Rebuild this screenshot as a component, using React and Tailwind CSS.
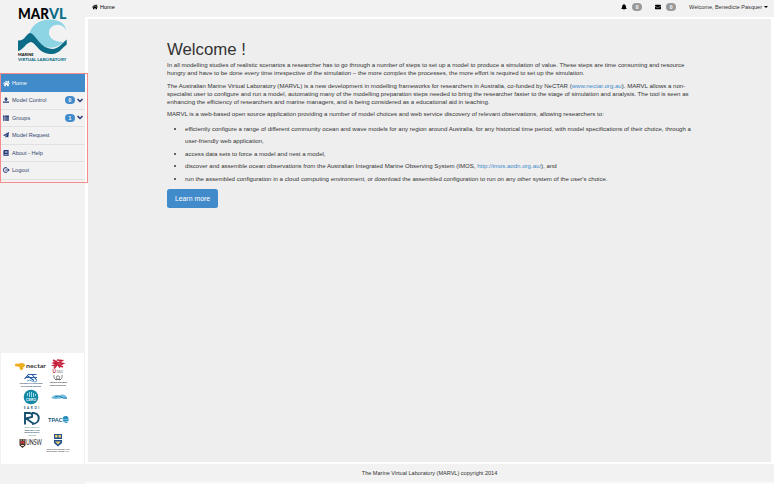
import { FaHome, FaBell, FaEnvelope, FaThList, FaBook } from "react-icons/fa";

const MENU = [
  { label: "Model Control", icon: <svg viewBox="0 0 12 12" className="size-[6px]" fill="currentColor"><path d="M6 0 10 5H7.500V8h-3V5H2zM0 9h12v2.500H0z" /></svg>, badge: "0" },
  { label: "Groups", icon: <FaThList size={6} />, badge: "1" },
  { label: "Model Request", icon: <svg viewBox="0 0 12 12" className="size-[6px]" fill="currentColor"><path d="M12 0 10.500 11 7 9.500 5 12V8.500L10 3 3.500 8 0 6.500z" /></svg> },
  { label: "About - Help", icon: <FaBook size={6} /> },
  { label: "Logout", icon: <svg viewBox="0 0 14 12" className="h-[6px] w-[7px]" fill="none" stroke="currentColor" strokeWidth="2"><path d="M8 1.500H4Q1 1.500 1 6t3 4.500h4M5 6h7M9 3l3.500 3L9 9" /></svg> },
];

function MarvlLogo() {
  return (
    <svg viewBox="0 0 51 56" className="ml-[17px] mt-[7px] h-[56px] w-[51px] overflow-visible" fontFamily="Lato, sans-serif">
      <text x="1" y="11.700" fontSize="14.200" fontWeight="900" textLength="31" lengthAdjust="spacingAndGlyphs" fill="#050505">MAR</text>
      <text x="32" y="11.700" fontSize="14.200" fontWeight="900" textLength="17.500" lengthAdjust="spacingAndGlyphs" fill="#0e6d86">VL</text>
      <path d="M12 29C13 19 22 12.500 33 12.500 42 12.500 48.500 17 49 23 46 17 38 16 33.500 21 29 28 35 35 46 35 43 39 36 42 29 40 21 37 20 29 12 29Z" fill="#8dd4e5" />
      <path d="M1 33.500C8 34 9 27 13 26 19 27 23 42 36 42 42 41.500 45 36 49.700 32.500V37.500C46 40 42 47 35 47 21 47 20 36 13.500 35 8 37 6 43 1 44Z" fill="#0e6d86" />
      <text x="1" y="49.200" fontSize="4.300" fontWeight="900" textLength="15.500" lengthAdjust="spacingAndGlyphs" fill="#111">MARINE</text>
      <text x="1" y="54" fontSize="4.500" fontWeight="900" textLength="48.500" lengthAdjust="spacingAndGlyphs" fill="#0e6d86">VIRTUAL LABORATORY</text>
    </svg>
  );
}

function Partners() {
  return (
    <svg viewBox="0 0 83 111" className="block h-[111px] w-[83px]" fontFamily="Lato, sans-serif">
      <g fill="#edae20">
        <ellipse cx="16" cy="12" rx="2.200" ry="1.600" />
        <path d="M17 11c3-2 7-1 7 1s-3 4-6 3l1-1c-2 0-3-1-2-3Z" />
        <circle cx="20.500" cy="15.500" r="1.600" />
      </g>
      <text x="25" y="15.300" fontSize="6" fontWeight="700" textLength="20" lengthAdjust="spacingAndGlyphs" fill="#333">nectar</text>
      <g fill="none" stroke="#c6203c" strokeWidth="1.600">
        <path d="M52 7l3 1.500-2.500 1.500 4 1-4 1.500 3 1M56 7l5 .5-3 2 4 1-4 2 4 1.500M55 8l4 6.500M56 12l-3 3.500" />
      </g>
      <text x="51.500" y="19.800" fontSize="4.600" fontWeight="700" fill="#c6203c">U</text>
      <text x="55" y="19.800" fontSize="4.600" textLength="7" lengthAdjust="spacingAndGlyphs" fill="#777">TAS</text>
      <g fill="none" stroke="#285fa8">
        <path d="M23.500 26l4-4.500h8M26 22.500l7 5M31 21.500l5 6M24 24.500h12" strokeWidth="1.100" />
        <path d="M26 28q3-2 5 0t5 0" stroke="#65a8d5" />
      </g>
      <text x="18.500" y="31" fontSize="2.500" fontWeight="900" textLength="23" lengthAdjust="spacingAndGlyphs" fill="#182f50">AUSTRALIAN INSTITUTE</text>
      <text x="20" y="33.700" fontSize="2.400" fontWeight="900" textLength="20" lengthAdjust="spacingAndGlyphs" fill="#182f50">OF MARINE SCIENCE</text>
      <g stroke="#666" fill="none" strokeWidth=".8">
        <circle cx="57" cy="24.500" r="1.700" />
        <path d="M53 22q-1 4 3 5M61 22q1 4-3 5M54 26.500h6" />
      </g>
      <text x="48.500" y="30" fontSize="2.300" fontWeight="700" textLength="17.500" lengthAdjust="spacingAndGlyphs" fill="#222">Australian Government</text>
      <text x="49" y="33.300" fontSize="2.300" fontWeight="700" textLength="16" lengthAdjust="spacingAndGlyphs" fill="#222">Bureau of Meteorology</text>
      <circle cx="30" cy="44" r="7.300" fill="#1488a5" />
      <path d="M26.500 43v-3m2 4v-5m2 5v-5m2 5v-4m2 3v-2" stroke="#9adce6" />
      <text x="25" y="48" fontSize="3.300" fontWeight="700" textLength="10" lengthAdjust="spacingAndGlyphs" fill="#fff">CSIRO</text>
      <path d="M50 45q4-5 8-2c4-3 7-1 8 2v1c-5-3-8 2-16-1Z" fill="#72bfdf" />
      <path d="M54 44q4-2 6 0t6 1" stroke="#287caa" fill="none" />
      <text x="22.800" y="56" fontSize="3.200" fontWeight="700" textLength="15.500" fill="#275777">SARDI</text>
      <path d="M24 71.500V60h4q4 0 3 4l-6 1.500 8 5.500M31 60c9-1 9 11 0 11" fill="none" stroke="#174f70" strokeWidth="1.900" />
      <g fill="#174766" fontSize="2.400" fontWeight="900">
        <text x="23.500" y="75.200" textLength="15" lengthAdjust="spacingAndGlyphs" fill="#55a08f">SOUTH AUSTRALIAN</text>
        <text x="23.500" y="77.800" textLength="15" lengthAdjust="spacingAndGlyphs">RESEARCH AND</text>
        <text x="23.500" y="80.300" textLength="15" lengthAdjust="spacingAndGlyphs">DEVELOPMENT</text>
        <text x="27" y="82.800" textLength="8" lengthAdjust="spacingAndGlyphs" fill="#55a08f">INSTITUTE</text>
      </g>
      <text x="47" y="69.300" fontSize="6.300" fontWeight="700" textLength="14.500" lengthAdjust="spacingAndGlyphs" fill="#155879">TPAC</text>
      <path d="M66.500 63.500C60 61 60 71 67 70l-2-1.800h2.500v-3Z" fill="#258dbc" />
      <path d="M62 66.500h5M63 68.500h4" stroke="#bfe1f0" strokeWidth=".5" />
      <path d="M18.500 86h6v6.500l-3 2.500-3-2.500Z" fill="#453b36" />
      <path d="M19.500 88.500h4v2h-4z" fill="#d83b35" />
      <path d="M19.500 87h1.500m1 0h1.500M20 92.500h3" stroke="#ead6b1" />
      <text x="25" y="91.500" fontSize="7" textLength="16" lengthAdjust="spacingAndGlyphs" fill="#222">UNSW</text>
      <path d="M53 81h8v9l-4 3.500-4-3.500Z" fill="#224f91" />
      <path d="M54 82h2.500v2.500H54zm3.500 0H60v2.500h-2.500zM54 88.500h6l-3 3Z" fill="#e9cc68" />
      <path d="M53 86.500h8" stroke="#fff" />
      <text x="45.500" y="96.700" fontSize="2.500" fontWeight="700" fontFamily="Liberation Serif, serif" textLength="23" lengthAdjust="spacingAndGlyphs" fill="#111">THE UNIVERSITY OF</text>
      <text x="45.500" y="99.300" fontSize="2.500" fontWeight="700" fontFamily="Liberation Serif, serif" textLength="23" lengthAdjust="spacingAndGlyphs" fill="#111">WESTERN AUSTRALIA</text>
    </svg>
  );
}

function CountBadge({ children }) {
  return <span className="flex h-[8px] w-[10px] items-center justify-center rounded-full bg-[#999] text-[5px] font-bold text-white">{children}</span>;
}

function Chevron() {
  return <svg viewBox="0 0 12 10" className="h-[5px] w-[6px] text-[#253b78]" fill="none" stroke="currentColor" strokeWidth="3"><path d="M1 2l5 5 5-5" /></svg>;
}

export default function App() {
  return (
    <div className="flex h-[484px] w-[774px] overflow-hidden bg-[#f2f2f2] font-['Liberation_Sans',Arial,sans-serif] text-[5.55px] leading-[8.3px] text-[#333]">
      <aside className="flex w-[85px] shrink-0 flex-col">
        <div className="h-[73px] shrink-0"><MarvlLogo /></div>
        <nav className="z-10 flex h-[110px] w-[88px] shrink-0 flex-col border border-[#f58b8b] text-[#34466f]">
          <a className="flex h-[18px] w-[84px] shrink-0 items-center gap-[2px] bg-[#428bca] pl-[2px] text-white"><FaHome size={7} />Home</a>
          {MENU.map((item) => (
            <a key={item.label} className="flex h-[17.5px] w-[84px] shrink-0 items-center border-b border-[#e1e1e1] pl-[2px] pr-[2px]">
              <span className="flex w-[9px] shrink-0 text-[#253b78]">{item.icon}</span>
              <span className="flex-1 whitespace-nowrap">{item.label}</span>
              {item.badge && <span className="mr-[2px] flex h-[8px] w-[10px] items-center justify-center rounded-full bg-[#428bca] text-[5px] font-bold text-white">{item.badge}</span>}
              {item.badge && <Chevron />}
            </a>
          ))}
        </nav>
        <div className="mt-auto mb-[20px] ml-px h-[111px] w-[83px] bg-white"><Partners /></div>
      </aside>
      <div className="flex min-w-0 flex-1 flex-col">
        <header className="flex h-[17px] shrink-0 items-center pb-[3px] pl-[7px] pr-[6px] text-black">
          <FaHome size={6} className="mr-[2px]" /><span>Home</span>
          <div className="ml-auto flex items-center">
            <FaBell size={6} className="mr-[5px]" /><CountBadge>0</CountBadge>
            <FaEnvelope size={6} className="ml-[13px] mr-[5px]" /><CountBadge>0</CountBadge>
            <span className="ml-[13px] whitespace-nowrap text-[#333]">Welcome, Benedicte Pasquer</span>
            <span className="ml-[2px] border-x-2 border-t-2 border-x-transparent border-t-black" />
          </div>
        </header>
        <main className="h-[447px] shrink-0 border-t-2 border-b-2 border-l-[3px] border-r-[3px] border-white bg-[#eee] pl-[79px] pt-[21px] text-[6.09px]">
          <h1 className="mb-[2px] h-[19px] whitespace-nowrap text-[16.8px] leading-[19px]">Welcome !</h1>
          <p className="mb-[4px] whitespace-nowrap">In all modelling studies of realistic scenarios a researcher has to go through a number of steps to set up a model to produce a simulation of value. These steps are time consuming and resource<br />hungry and have to be done every time irrespective of the simulation – the more complex the processes, the more effort is required to set up the simulation.</p>
          <p className="mb-[4px] whitespace-nowrap">The Australian Marine Virtual Laboratory (MARVL) is a new development in modelling frameworks for researchers in Australia, co-funded by NeCTAR (<a className="text-[#428bca]">www.nectar.org.au</a>). MARVL allows a non-<br />specialist user to configure and run a model, automating many of the modelling preparation steps needed to bring the researcher faster to the stage of simulation and analysis. The tool is seen as<br />enhancing the efficiency of researchers and marine managers, and is being considered as a educational aid in teaching.</p>
          <p className="mb-[4px] whitespace-nowrap">MARVL is a web-based open source application providing a number of model choices and web service discovery of relevant observations, allowing researchers to:</p>
          <ul className="mb-[4px] list-disc whitespace-nowrap pl-[18px] leading-[12.5px]">
            <li>efficiently configure a range of different community ocean and wave models for any region around Australia, for any historical time period, with model specifications of their choice, through a<br />user-friendly web application,</li>
            <li>access data sets to force a model and nest a model,</li>
            <li>discover and assemble ocean observations from the Australian Integrated Marine Observing System (IMOS, <a className="text-[#428bca]">http://imos.aodn.org.au/</a>), and</li>
            <li>run the assembled configuration in a cloud computing environment, or download the assembled configuration to run on any other system of the user's choice.</li>
          </ul>
          <button className="h-[19px] w-[51px] rounded-[2.5px] bg-[#428bca] text-[6.9px] leading-[19px] text-white">Learn more</button>
        </main>
        <footer className="flex h-[18px] shrink-0 items-center justify-center">The Marine Virtual Laboratory (MARVL) copyright 2014</footer>
        <div className="flex-1 bg-[#fafafa]" />
      </div>
    </div>
  );
}
